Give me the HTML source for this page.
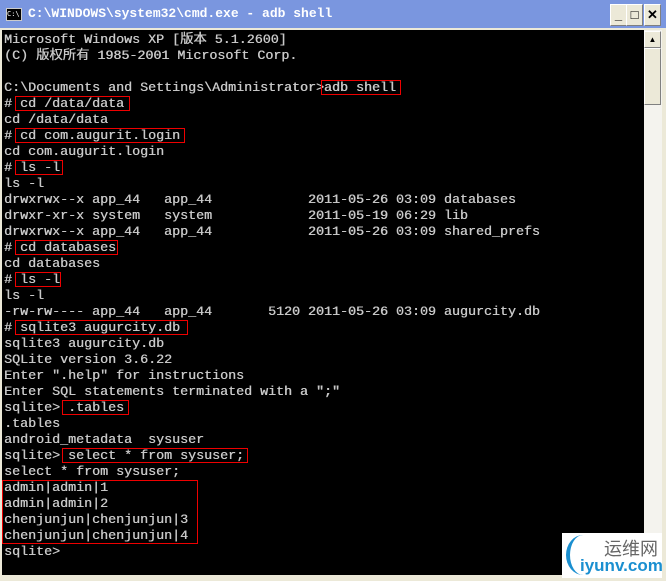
<!DOCTYPE html><html><head><style>
body{margin:0;width:666px;height:581px;background:#ece9d8;position:relative;overflow:hidden}
.tb{position:absolute;left:0;top:0;width:666px;height:28px;background:#7a96df}
.tt{position:absolute;left:28px;top:6px;color:#fff;font:bold 13px "Liberation Mono",monospace;white-space:pre}
.btn{position:absolute;top:4px;width:15px;height:20px;background:#ece9d8;border:1px solid #fff;border-right-color:#808080;border-bottom-color:#808080;font:bold 13px "Liberation Sans",sans-serif;text-align:center;line-height:20px}
.con{position:absolute;left:2px;top:30px;width:642px;height:545px;background:#000}
pre{margin:0;position:absolute;left:4px;top:33px;color:#c8c8c8;font:13.33px/16px "Liberation Mono","Noto Sans CJK SC",monospace;text-shadow:0.4px 0 0 #c8c8c8}
.b{position:absolute;border:1px solid #e00;height:13px}
.sb{position:absolute;left:644px;top:30px;width:18px;height:545px;background:#f4f3ee}
</style></head><body>
<div class="tb"></div>
<div style="position:absolute;left:6px;top:8px;width:14px;height:11px;background:#000;border:1px solid #ccc;color:#fff;font:7px monospace;line-height:11px">C:\</div>
<div class="tt">C:\WINDOWS\system32\cmd.exe - adb shell</div>
<div class="btn" style="left:610px">_</div>
<div class="btn" style="left:626px">□</div>
<div class="btn" style="left:644px">✕</div>
<div class="con"></div>
<div class="sb"></div>
<div style="position:absolute;left:644px;top:31px;width:15px;height:15px;background:#ece9d8;border:1px solid #fff;border-right-color:#808080;border-bottom-color:#808080;font-size:8px;text-align:center;line-height:15px">▲</div>
<div style="position:absolute;left:644px;top:48px;width:15px;height:55px;background:#ece9d8;border:1px solid #fff;border-right-color:#808080;border-bottom-color:#808080"></div>
<pre>Microsoft Windows XP [版本 5.1.2600]
(C) 版权所有 1985-2001 Microsoft Corp.

C:\Documents and Settings\Administrator>adb shell
# cd /data/data
cd /data/data
# cd com.augurit.login
cd com.augurit.login
# ls -l
ls -l
drwxrwx--x app_44   app_44            2011-05-26 03:09 databases
drwxr-xr-x system   system            2011-05-19 06:29 lib
drwxrwx--x app_44   app_44            2011-05-26 03:09 shared_prefs
# cd databases
cd databases
# ls -l
ls -l
-rw-rw---- app_44   app_44       5120 2011-05-26 03:09 augurcity.db
# sqlite3 augurcity.db
sqlite3 augurcity.db
SQLite version 3.6.22
Enter ".help" for instructions
Enter SQL statements terminated with a ";"
sqlite> .tables
.tables
android_metadata  sysuser
sqlite> select * from sysuser;
select * from sysuser;
admin|admin|1
admin|admin|2
chenjunjun|chenjunjun|3
chenjunjun|chenjunjun|4
sqlite></pre>
<div class="b" style="left:321px;top:80px;width:78px"></div>
<div class="b" style="left:15px;top:96px;width:113px"></div>
<div class="b" style="left:15px;top:128px;width:168px"></div>
<div class="b" style="left:15px;top:160px;width:46px"></div>
<div class="b" style="left:15px;top:240px;width:101px"></div>
<div class="b" style="left:15px;top:272px;width:44px"></div>
<div class="b" style="left:15px;top:320px;width:171px"></div>
<div class="b" style="left:62px;top:400px;width:65px"></div>
<div class="b" style="left:62px;top:448px;width:184px"></div>
<div class="b" style="left:2px;top:480px;width:194px;height:62px"></div>
<div style="position:absolute;left:562px;top:533px;width:100px;height:45px;background:#fff"></div>
<div style="position:absolute;left:566px;top:535px;width:34px;height:40px;border-radius:50%;border-left:4px solid #1a8fd0;box-sizing:border-box"></div>
<div style="position:absolute;left:604px;top:535px;color:#666;font:18px 'Noto Sans CJK SC',sans-serif">运维网</div>
<div style="position:absolute;left:580px;top:556px;color:#1a8fd0;font:bold 17px 'Liberation Sans',sans-serif">iyunv.com</div>
</body></html>
